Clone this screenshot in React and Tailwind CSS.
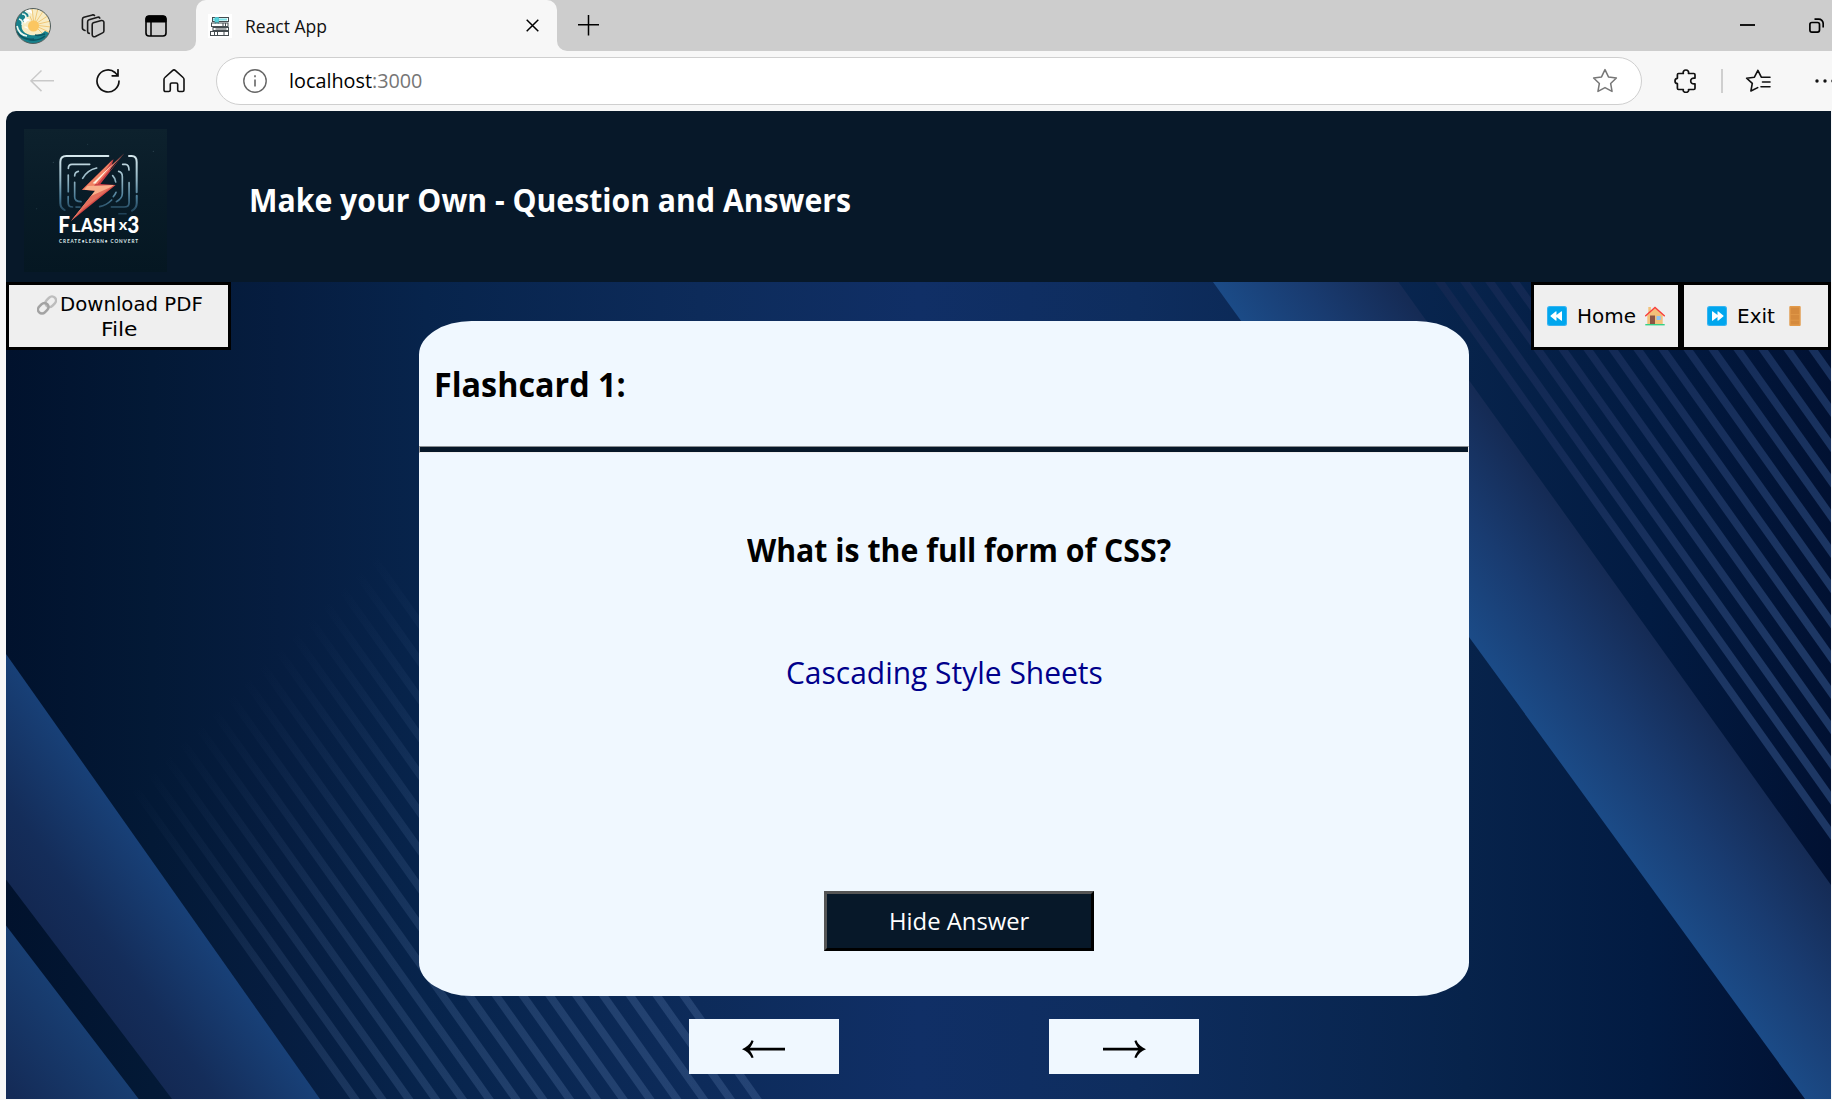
import React, { useLayoutEffect, useRef, useState } from "react";

/* Sets a line of text to a given width by scaling it horizontally. */
function FitText({ width, className = "", children }) {
  const ref = useRef(null);
  const [scale, setScale] = useState(1);
  useLayoutEffect(() => {
    const measure = () => {
      if (ref.current && ref.current.offsetWidth) setScale(width / ref.current.offsetWidth);
    };
    measure();
    document.fonts?.ready.then(measure);
  }, [width]);
  return (
    <span className="inline-flex shrink-0" style={{ width }}>
      <span
        ref={ref}
        className={`inline-block shrink-0 origin-left whitespace-nowrap ${className}`}
        style={{ transform: `scaleX(${scale})` }}
      >
        {children}
      </span>
    </span>
  );
}

function Avatar() {
  return (
    <svg className="h-9 w-9 shrink-0" viewBox="0 0 36 36">
      <defs>
        <clipPath id="av"><circle cx="18" cy="18" r="17.5" /></clipPath>
      </defs>
      <g clipPath="url(#av)">
        <rect width="36" height="36" fill="#f8ecc4" />
        <path d="M19 17 17 0M19 17 23 0M19 17 29 2M19 17 34 7M19 17 36 13M19 17 36 19M19 17 36 25M19 17 33 31M19 17 12 2" stroke="#f0c878" />
        <circle cx="18.500" cy="18" r="5.500" fill="#fbc661" />
        <path d="M0 0h12c-3 2-3 4 0 5 2 1 3 2 1 4-3-1-4 1-3 4-3 1-4 4-3 8 1 3 4 5 8 6 6 1 11 0 15-4l6 3v10H0z" fill="#17818c" />
        <path d="M10 3c3 1 5 3 4 5M7 6c4 0 5 3 3 6M4 11c3 1 4 3 3 6M2 18c1 5 4 9 10 10" stroke="#e9f5ee" strokeWidth="1.7" fill="none" />
        <path d="M9 1c4-2 9 1 8 5-2-2-5-2-8-5M8 12c2-2 6-2 7 1-2-1-4 1-5 3M9 19c2-1 4 0 4 2" fill="#fff" />
        <path d="M2 24c4 6 10 8 17 7M12 31c6 2 13 1 18-3M20 27c4 1 7 0 10-1" stroke="#0b5763" strokeWidth="1.6" fill="none" />
      </g>
      <circle cx="18" cy="18" r="17.5" fill="none" stroke="#4f5c5c" strokeWidth="1" />
    </svg>
  );
}

function Books() {
  return (
    <svg className="h-6 w-6 shrink-0" viewBox="0 0 24 24" fill="none" stroke="#454c50" strokeWidth="1">
      <rect width="24" height="24" fill="#fff" stroke="none" />
      <rect x="4.500" y="3.500" width="16" height="4" />
      <path d="M5 5.500h14" stroke="#7be0e6" strokeWidth="2" />
      <path d="M7 3.500v6l1.800-1.300 1.700 1.300v-6z" fill="#52d3dc" stroke="#52c3cc" strokeWidth=".8" />
      <rect x="3.500" y="9" width="16.500" height="3.500" />
      <rect x="5" y="13.500" width="15.500" height="3" />
      <rect x="2.500" y="17.500" width="18" height="4" />
      <path d="M15 9v3.500M17.500 9v3.500M6.500 17.500v4M9.500 17.500v4M16 17.500v4M7.500 15h11" />
    </svg>
  );
}

function TabStrip() {
  return (
    <div className="flex h-[51px] bg-[#cdcdcd]">
      <div className="flex w-[196px] shrink-0 items-center pl-[15px]">
        <Avatar />
        <svg className="ml-[30px] h-6 w-6 shrink-0" viewBox="0 0 24 24" fill="none" stroke="#1b1b1b" strokeWidth="1.6" strokeLinecap="round" strokeLinejoin="round">
          <path d="M12.300 8.700l8-2.200c1.300-.3 2.600.5 2.600 1.800v8.600c0 .9-.5 1.600-1.300 2l-7.200 3.600c-1.500.7-3.200-.2-3.200-1.800v-10c0-1 .3-1.700 1.100-2z" />
          <path d="M8.300 19.400c-1.100-.2-1.700-.9-1.700-2V7.800c0-1 .6-1.800 1.500-2.100l8.600-2.500c.9-.2 1.700.1 2.100.9" />
          <path d="M4 16.500c-1.600-.3-2.600-1-2.600-2.400V5.400c0-1 .6-1.800 1.500-2.100l8.600-2.400c.8-.2 1.500 0 2 .6" />
        </svg>
        <svg className="ml-10 h-[22px] w-[22px] shrink-0" viewBox="0 0 22 22" fill="none" stroke="#000">
          <rect x="1" y="1" width="20" height="20" rx="3" strokeWidth="1.6" />
          <path d="M1 7V4a3 3 0 0 1 3-3h14a3 3 0 0 1 3 3v3z" fill="#000" />
          <path d="M6 6v15" strokeWidth="1.5" />
        </svg>
      </div>
      <div className="relative flex w-[361px] shrink-0 items-center rounded-t-[10px] bg-[#f7f7f7] pl-3">
        <svg className="absolute -left-[10px] bottom-0 h-[10px] w-[10px]" viewBox="0 0 10 10"><path d="M10 0v10H0a10 10 0 0 0 10-10z" fill="#f7f7f7" /></svg>
        <svg className="absolute -right-[10px] bottom-0 h-[10px] w-[10px]" viewBox="0 0 10 10"><path d="M0 0v10h10A10 10 0 0 1 0 0z" fill="#f7f7f7" /></svg>
        <Books />
        <div className="ml-[13px] flex">
          <FitText width={82} className="font-['Open_Sans','Noto_Sans',sans-serif] text-[17.5px] leading-6 text-[#111]">React App</FitText>
        </div>
        <svg className="ml-auto mr-[18px] h-[13px] w-[13px]" viewBox="0 0 13 13" stroke="#000" strokeWidth="1.5"><path d="M.7.7l11.600 11.600M12.300.7.7 12.300" /></svg>
      </div>
      <svg className="ml-[21px] mt-[15px] h-[21px] w-[21px]" viewBox="0 0 21 21" stroke="#000" strokeWidth="1.500"><path d="M10.500 0v20.500M0 9.700h21" /></svg>
      <div className="ml-auto flex">
        <svg className="mt-[18px] h-4 w-[15px]" viewBox="0 0 15 16" stroke="#000" strokeWidth="1.8"><path d="M0 7h15" /></svg>
        <svg className="ml-[54px] mr-2 mt-[18px] h-[15px] w-[15px]" viewBox="0 0 15 15" fill="none" stroke="#000" strokeWidth="1.700">
          <rect x=".9" y="4.500" width="9.600" height="9.600" rx="2" />
          <path d="M5.500 1.200h4a4.500 4.500 0 0 1 4.700 4.500v3.800" />
        </svg>
      </div>
    </div>
  );
}

const STAR = "M12 1.500l3.200 6.700 7.300 1-5.300 5.100 1.300 7.300L12 18.100l-6.500 3.500 1.300-7.300L1.500 9.200l7.300-1z";

function Toolbar() {
  return (
    <div className="flex h-[60px] items-center bg-[#f7f7f7] pl-[30px]">
      <svg className="h-6 w-6 shrink-0" viewBox="0 0 24 24" fill="none" stroke="#c9c9c9" strokeWidth="1.500"><path d="M11.500 1.500.9 11.800l10.600 10.300M.9 11.800H24" /></svg>
      <svg className="ml-[42px] h-6 w-6 shrink-0" viewBox="0 0 24 24" fill="none" stroke="#111" strokeWidth="1.700" strokeLinecap="round">
        <path d="M23 12a11 11 0 1 1-4-8.500L21.800 6.500M22 .8v6h-5.800" />
      </svg>
      <svg className="ml-[43px] h-6 w-[22px] shrink-0" viewBox="0 0 22 24" fill="none" stroke="#111" strokeWidth="1.600" strokeLinejoin="round">
        <path d="M1 10.500c0-.8.300-1.500.9-2L9.500 1.600c.9-.8 2.100-.8 3 0l7.600 6.900c.6.500.9 1.200.9 2V21c0 .9-.6 1.500-1.500 1.500h-3.300c-.9 0-1.500-.6-1.500-1.500v-5.500c0-.9-.6-1.500-1.500-1.500H8.800c-.9 0-1.500.6-1.500 1.500V21c0 .9-.6 1.500-1.500 1.500H2.500C1.600 22.500 1 21.900 1 21z" />
      </svg>
      <div className="ml-[31px] flex h-12 w-[1426px] shrink-0 items-center rounded-full border border-[#cfcfcf] bg-white pl-[26px] pr-[23px]">
        <svg className="h-6 w-6 shrink-0" viewBox="0 0 24 24" fill="none" stroke="#666" strokeWidth="1.400">
          <circle cx="12" cy="12" r="11.200" /><path d="M12 10.500v7M12 6.300v2" strokeWidth="1.600" />
        </svg>
        <div className="ml-[22px] flex">
          <FitText width={133} className="font-['Open_Sans','Noto_Sans',sans-serif] text-[19.5px] leading-7 text-black">localhost<span className="text-[#767676]">:3000</span></FitText>
        </div>
        <svg className="ml-auto h-[26px] w-[26px]" viewBox="0 0 24 24" fill="none" stroke="#777" strokeWidth="1.400" strokeLinejoin="round"><path d={STAR} /></svg>
      </div>
      <svg className="ml-[32px] h-6 w-6 shrink-0" viewBox="0 0 24 24" fill="none" stroke="#111" strokeWidth="1.700" strokeLinejoin="round">
        <path d="M4.500 4.500H9.300C8.800 2.500 10 1 11.900 1s3.100 1.500 2.600 3.500h5.300c.8 0 1.200.5 1.200 1.200v3.400c-2.700-.4-4.300 1-4.300 2.900s1.600 3.300 4.300 2.900v4.400c0 .8-.5 1.200-1.200 1.200h-5.300c.5 1.500-.7 2.900-2.600 2.900s-3.100-1.400-2.600-2.900H4.500c-.7 0-1.100-.5-1.100-1.200v-4.600C1.900 14.500 1 13.500 1 12s.9-2.600 2.400-2.700V5.700c0-.7.400-1.200 1.100-1.200z" />
      </svg>
      <div className="ml-[23px] h-6 w-[2px] shrink-0 bg-[#cfcfcf]" />
      <svg className="ml-[22px] h-6 w-[26px] shrink-0" viewBox="0 0 26 24" fill="none" stroke="#111" strokeWidth="1.600" strokeLinejoin="round" strokeLinecap="round">
        <path d="M16.300 8.200 12.900 1.300 9.400 8.200 1.600 9.200l5.700 5.200L5.900 22l6.800-3.400M16.300 8.200h8.700M17.500 13h7.500M16 17.800h9" />
      </svg>
      <svg className="ml-[44px] h-1 w-5 shrink-0" viewBox="0 0 20 4" fill="#111"><circle cx="2" cy="2" r="1.700" /><circle cx="10" cy="2" r="1.700" /><circle cx="18" cy="2" r="1.700" /></svg>
    </div>
  );
}

function Logo() {
  return (
    <svg className="mt-[7px] h-[143px] w-[143px] shrink-0" viewBox="72 72 429 429" fill="none">
      <defs>
        <linearGradient id="lbg" x1="0" y1="0" x2="0" y2="1">
          <stop offset="0" stopColor="#0d212d" /><stop offset=".5" stopColor="#081b27" /><stop offset="1" stopColor="#051722" />
        </linearGradient>
        <linearGradient id="lst" gradientUnits="userSpaceOnUse" x1="0" y1="150" x2="0" y2="320">
          <stop offset="0" stopColor="#d7e9ee" /><stop offset=".45" stopColor="#8fb2c1" /><stop offset=".75" stopColor="#4a7b96" /><stop offset="1" stopColor="#204258" />
        </linearGradient>
      </defs>
      <rect x="72" y="72" width="429" height="429" fill="url(#lbg)" />
      <g stroke="url(#lst)" strokeWidth="5" strokeLinecap="round">
        <path d="M325 153.100H199q-18 0-18 18v124q0 14 13 20M387 152.800h8q15 0 15 18v91M410.200 272v22q0 15-14 23" strokeWidth="6" />
        <path d="M269 178.200h-53q-11 0-11 12M204.800 210v50M204.500 275v18q0 13 13 13M368 178.200h8q11 0 11 17M387.200 233v60q0 13-15 13h-38M228 306.200h12" />
        <path d="M235 199q-11 2-11 14M224 232v44q0 14 19 14M356 199q11 2 11 16v50q0 16-18 25M290 189q-28 6-42 31M338 212q8 8 9 19M348 262q-4 9-8 13M335 285q-16 16-36 20M357 326.200h21" />
      </g>
      <path d="M340 163 246 254l40 3-73 91 134-108-46-3 73-93-45 55 11-34z" fill="#c93f45" />
      <path d="M337 165 246 255l30-4 50-68z" fill="#f08364" />
      <path d="M374 144 278 234l14 4 52-62z" fill="#f0725f" />
      <path d="M340 175 278 235l8 1z" fill="#fff1dc" />
      <path d="M262 243l80-3-92 71-37 37 72-91-32-3z" fill="#f9b08b" />
      <path d="M346 240 240 323l-27 25 60-75z" fill="#dc5a4e" opacity=".75" />
      <g fill="#fff" fontFamily="Lato, sans-serif" fontWeight="900">
        <text x="175" y="383" fontSize="69" textLength="35" lengthAdjust="spacingAndGlyphs">F</text>
        <text x="213" y="381" fontSize="35" textLength="29" lengthAdjust="spacingAndGlyphs">L</text>
        <text x="243" y="381" fontSize="55" textLength="104" lengthAdjust="spacingAndGlyphs">ASH</text>
        <text x="356" y="374" fontSize="46" fontWeight="700" textLength="26" lengthAdjust="spacingAndGlyphs">x</text>
        <text x="382" y="383" fontSize="69" textLength="36" lengthAdjust="spacingAndGlyphs">3</text>
        <text x="177" y="413" fontSize="14" fontWeight="700" fill="#dfe8ea" textLength="237">CREATE•LEARN• CONVERT</text>
      </g>
      <g fill="#2c4450"><circle cx="160" cy="172" r="2" /><circle cx="460" cy="139" r="2" /><circle cx="263" cy="118" r="1.500" /><circle cx="110" cy="311" r="1.500" /></g>
    </svg>
  );
}

const stripes = Array.from({ length: 16 }, (_, k) => k);

/* Decorative backdrop: a dark blue sweep with diagonal bands and pinstripes. */
function Backdrop() {
  return (
    <svg className="absolute inset-0 h-full w-full" viewBox="6 282 1825 817" preserveAspectRatio="none" fill="none">
      <defs>
        <linearGradient id="bg">
          <stop offset="0" stopColor="#01122d" /><stop offset=".08" stopColor="#031936" /><stop offset=".15" stopColor="#061d40" />
          <stop offset=".23" stopColor="#07244c" /><stop offset=".38" stopColor="#0d2b5a" /><stop offset=".5" stopColor="#102f66" />
          <stop offset=".62" stopColor="#0e2d5e" /><stop offset=".8" stopColor="#07234b" /><stop offset=".9" stopColor="#021b42" />
          <stop offset="1" stopColor="#011132" />
        </linearGradient>
        <linearGradient id="ba" gradientUnits="userSpaceOnUse" x1="155" y1="866" x2="51" y2="939">
          <stop offset="0" stopColor="#184077" /><stop offset=".65" stopColor="#142d5a" /><stop offset="1" stopColor="#132852" />
        </linearGradient>
        <linearGradient id="bb" gradientUnits="userSpaceOnUse" x1="6" y1="925" x2="-72" y2="985">
          <stop offset="0" stopColor="#183e72" /><stop offset="1" stopColor="#142b57" />
        </linearGradient>
        <linearGradient id="br" gradientUnits="userSpaceOnUse" x1="1469" y1="637" x2="1589" y2="550">
          <stop offset="0" stopColor="#1b4b87" /><stop offset=".5" stopColor="#193b70" /><stop offset="1" stopColor="#152b55" />
        </linearGradient>
        <linearGradient id="sl" gradientUnits="userSpaceOnUse" x1="134" y1="786" x2="470" y2="1134">
          <stop offset="0" stopColor="#7496c8" stopOpacity="0" /><stop offset=".45" stopColor="#7496c8" stopOpacity=".13" /><stop offset="1" stopColor="#7496c8" stopOpacity=".22" />
        </linearGradient>
        <linearGradient id="sr" gradientUnits="userSpaceOnUse" x1="1440" y1="282" x2="1800" y2="640">
          <stop offset="0" stopColor="#122750" /><stop offset=".4" stopColor="#142b57" /><stop offset="1" stopColor="#1d3764" />
        </linearGradient>
      </defs>
      <rect x="6" y="282" width="1825" height="817" fill="url(#bg)" />
      <g stroke="url(#sl)" strokeWidth="7.700">
        {stripes.map((k) => {
          const x = 355 + 26.8 * k;
          return <path key={k} d={`M${x - 395} ${1099 - 557}L${x + 10} ${1099 + 14}`} />;
        })}
      </g>
      <g stroke="url(#sr)" strokeWidth="7.700">
        {stripes.map((k) => {
          const x = 1440 + 25 * k;
          return <path key={k} d={`M${x - 10} ${282 - 14.1}L${x + 500} ${282 + 705}`} />;
        })}
      </g>
      <path d="M1213 282H1398.500L1831 885V1099H1805L1469 637z" fill="url(#br)" />
      <path d="M6 654 320 1099H172L6 879.500z" fill="url(#ba)" />
      <path d="M6 925.500 138.700 1099H6z" fill="url(#bb)" />
    </svg>
  );
}

function LinkIcon() {
  return (
    <svg className="h-5 w-5 shrink-0" viewBox="0 0 20 20" fill="none" strokeWidth="2.500">
      <rect x="8" y="2.700" width="11.500" height="8" rx="4" transform="rotate(-45 13.750 6.700)" stroke="#bdbdbd" />
      <rect x=".5" y="9.300" width="11.500" height="8" rx="4" transform="rotate(-45 6.250 13.300)" stroke="#a3a3a3" />
    </svg>
  );
}

function SeekIcon({ back }) {
  return (
    <svg className={`h-5 w-5 shrink-0 ${back ? "-scale-x-100" : ""}`} viewBox="0 0 20 20">
      <rect width="20" height="20" rx="2.500" fill="#35b3f2" />
      <rect x="1" y="1" width="18" height="18" rx="2" fill="#00a6ed" />
      <path d="M5 5.800v8.400q0 1 .9.400l4.600-3.700v3.300q0 1 .9.400l4.900-4q.7-.6 0-1.200l-4.900-4q-.9-.6-.9.400v3.300L5.900 5.400q-.9-.6-.9.400z" fill="#fff" />
    </svg>
  );
}

function HouseIcon() {
  return (
    <svg className="h-5 w-5 shrink-0" viewBox="0 0 20 20">
      <path d="M3.300 1h2.600v6H3.300z" fill="#f3c17a" />
      <path d="M2.300 9 10 2l7.700 7v9.200H2.300z" fill="#f3c17a" />
      <path d="M5 9.500h5v8.700H5z" fill="#8c5543" />
      <path d="M11.500 10h4.300v4h-4.300z" fill="#8fc3f0" />
      <path d="M.7 9.700 10 1.400l9.300 8.300" fill="none" stroke="#f8403c" strokeWidth="1.500" strokeLinecap="round" />
      <path d="M.3 18h19.400v1.400H.3z" fill="#35d188" />
    </svg>
  );
}

function DoorIcon() {
  return (
    <svg className="h-5 w-5 shrink-0" viewBox="0 0 20 20">
      <rect x="4.300" y="0" width="11.400" height="20" rx="1" fill="#e29a4a" />
      <path d="M5.800 1.500h8.400v6.800H5.800zM5.800 9h8.400v4.800H5.800zM5.800 14.500h8.400v4H5.800z" fill="#d58a3d" />
    </svg>
  );
}

function BoxButton({ className = "", children }) {
  return (
    <button className={`h-[68px] shrink-0 border-[3px] border-black bg-[#efefef] font-['DejaVu_Sans',Verdana,sans-serif] text-[20px] leading-[25px] text-black ${className}`}>
      {children}
    </button>
  );
}

function ArrowButton({ forward }) {
  return (
    <button className={`flex h-[55px] w-[150px] items-center justify-center bg-[#f0f8ff] pt-[5px] ${forward ? "pl-0" : "pr-[2px]"}`}>
      <svg className={`h-5 w-[43px] ${forward ? "-scale-x-100" : ""}`} viewBox="0 0 43 20">
        <path d="M4 8.800h39v2.800H4z" fill="#000" />
        <path d="M0 10.200C4.500 8.400 8 5.500 9.600 1.300l2 .7C10.600 5 9 7.500 7 10.200c2 2.600 3.600 5.200 4.600 8.200l-2 .7C8 14.900 4.500 12 0 10.200z" fill="#000" />
      </svg>
    </button>
  );
}

export default function App() {
  const humanist = "font-['Open_Sans','Noto_Sans',sans-serif]";
  return (
    <div className="flex h-[1100px] w-[1832px] flex-col overflow-hidden bg-[#f7f7f7]">
      <TabStrip />
      <Toolbar />
      <div className="ml-[6px] w-[1825px] overflow-hidden rounded-tl-[10px]">
        <header className="flex h-[171px] items-center bg-[#071829] pl-[18px]">
          <Logo />
          <h1 className="ml-[82px] pt-[6px]">
            <FitText width={602} className={`${humanist} text-[31.6px] font-bold leading-[44px] text-white`}>Make your Own - Question and Answers</FitText>
          </h1>
        </header>
        <main className="relative h-[817px]">
          <Backdrop />
          <div className="relative grid h-full grid-cols-[413px_1050px_362px]">
            <div>
              <BoxButton className="flex w-[225px] flex-col items-center justify-center pt-[2px]">
                <span className="flex items-center gap-[3px] pl-[3px]">
                  <LinkIcon />
                  <FitText width={143}>Download PDF</FitText>
                </span>
                <FitText width={36}>File</FitText>
              </BoxButton>
            </div>
            <div className="pt-[39px]">
              <section className="h-[675px] overflow-hidden rounded-[5%] bg-[#f0f8ff]">
                <h2 className="flex h-[125px] items-center pl-[15px]">
                  <FitText width={192} className={`${humanist} text-[34.5px] font-bold leading-[48px] text-black`}>Flashcard 1:</FitText>
                </h2>
                <div className="h-[7px] border border-b-[#eeeeee] border-l-[#9a9a9a] border-r-[#eeeeee] border-t-[#8a8f93] bg-[#071829]" />
                <div className="flex flex-col items-center">
                  <div className="mt-[75px] flex h-11 items-center pl-[29px]">
                    <FitText width={424} className={`${humanist} text-[31.6px] font-bold leading-[44px] text-black`}>What is the full form of CSS?</FitText>
                  </div>
                  <div className="mt-[78px] flex h-11 items-center">
                    <FitText width={317} className={`${humanist} text-[31px] leading-[44px] text-[#00008b]`}>Cascading Style Sheets</FitText>
                  </div>
                  <button className="ml-[30px] mt-[197px] flex h-[60px] w-[270px] items-center justify-center border-[3px] border-b-black border-l-[#555] border-r-black border-t-[#555] bg-[#071829]">
                    <FitText width={140} className={`${humanist} text-[24.5px] leading-9 text-white`}>Hide Answer</FitText>
                  </button>
                </div>
              </section>
              <nav className="mt-[23px] flex justify-center gap-[210px]">
                <ArrowButton />
                <ArrowButton forward />
              </nav>
            </div>
            <div className="flex items-start justify-end">
              <BoxButton className="flex w-[150px] items-center justify-center">
                <SeekIcon back />
                <span className="ml-[10px] mr-[9px] flex pt-[1px]"><FitText width={59}>Home</FitText></span>
                <HouseIcon />
              </BoxButton>
              <BoxButton className="flex w-[150px] items-center justify-center">
                <SeekIcon />
                <span className="ml-[10px] mr-[10px] flex pt-[1px]"><FitText width={38}>Exit</FitText></span>
                <DoorIcon />
              </BoxButton>
            </div>
          </div>
        </main>
      </div>
    </div>
  );
}
